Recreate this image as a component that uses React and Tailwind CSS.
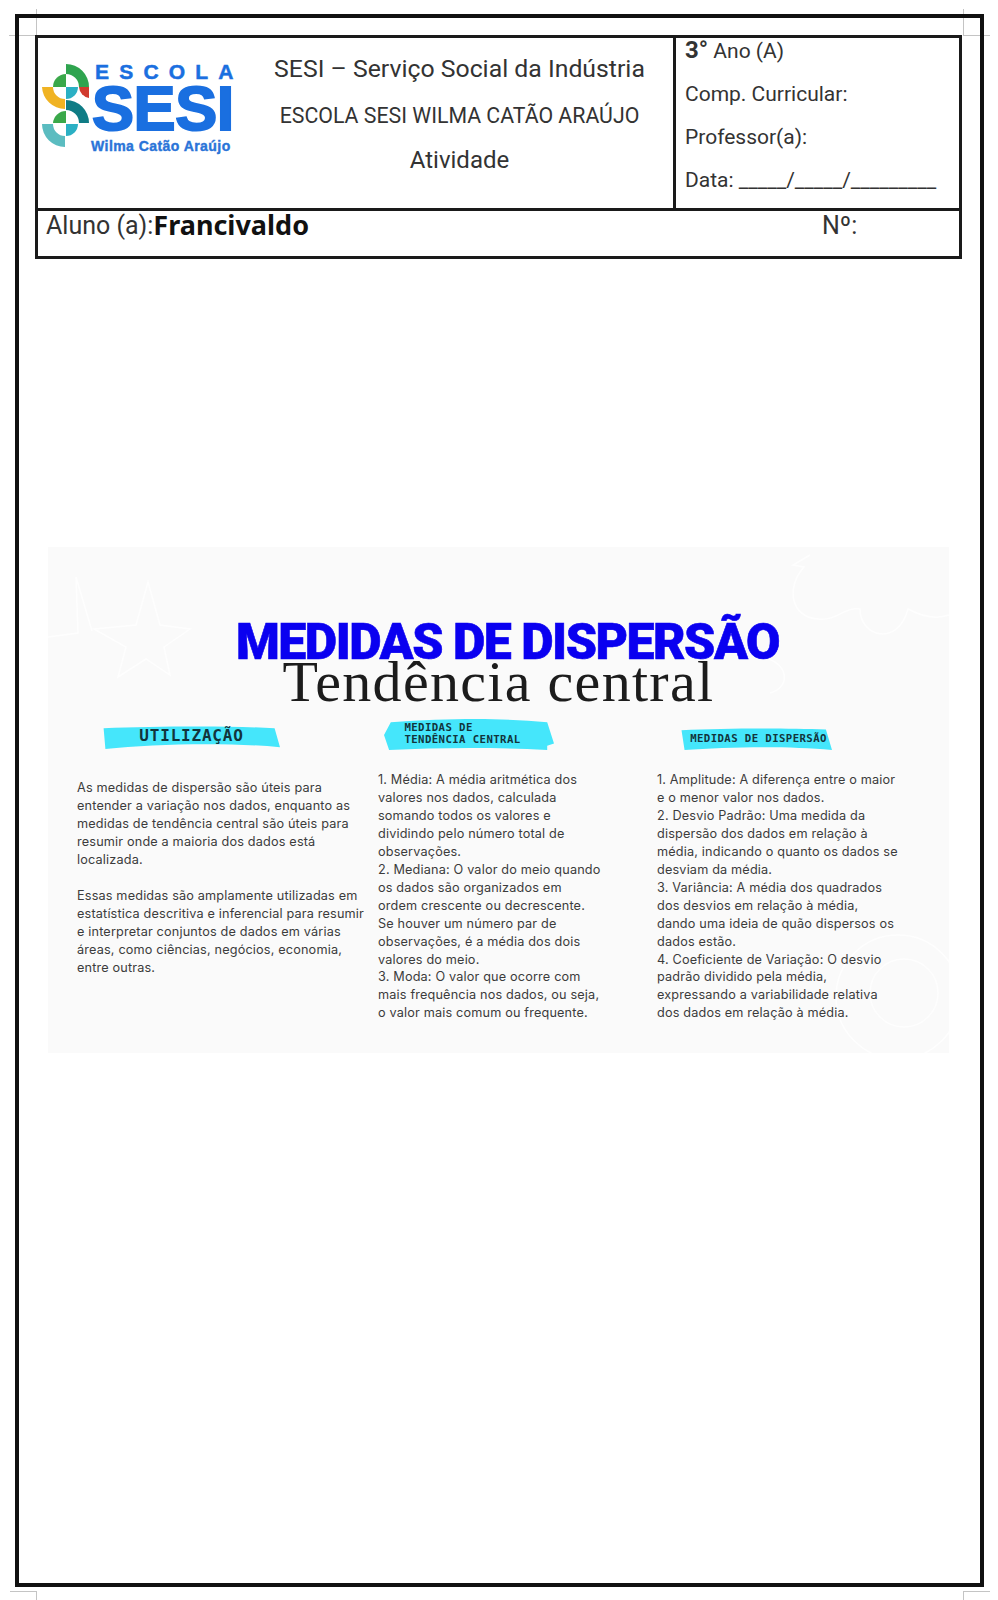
import React from "react";

const utilizacao = [
  "As medidas de dispersão são úteis para",
  "entender a variação nos dados, enquanto as",
  "medidas de tendência central são úteis para",
  "resumir onde a maioria dos dados está",
  "localizada.",
  "\u00a0",
  "Essas medidas são amplamente utilizadas em",
  "estatística descritiva e inferencial para resumir",
  "e interpretar conjuntos de dados em várias",
  "áreas, como ciências, negócios, economia,",
  "entre outras.",
];

const tendencia = [
  "1. Média: A média aritmética dos",
  "valores nos dados, calculada",
  "somando todos os valores e",
  "dividindo pelo número total de",
  "observações.",
  "2. Mediana: O valor do meio quando",
  "os dados são organizados em",
  "ordem crescente ou decrescente.",
  "Se houver um número par de",
  "observações, é a média dos dois",
  "valores do meio.",
  "3. Moda: O valor que ocorre com",
  "mais frequência nos dados, ou seja,",
  "o valor mais comum ou frequente.",
];

const dispersao = [
  "1. Amplitude: A diferença entre o maior",
  "e o menor valor nos dados.",
  "2. Desvio Padrão: Uma medida da",
  "dispersão dos dados em relação à",
  "média, indicando o quanto os dados se",
  "desviam da média.",
  "3. Variância: A média dos quadrados",
  "dos desvios em relação à média,",
  "dando uma ideia de quão dispersos os",
  "dados estão.",
  "4. Coeficiente de Variação: O desvio",
  "padrão dividido pela média,",
  "expressando a variabilidade relativa",
  "dos dados em relação à média.",
];

const Lines = ({ items }) => (
  <div className="font-['Inter',sans-serif] text-[12.7px] leading-[17.95px] text-[#3c3c3c] whitespace-nowrap tracking-[0.16px]">
    {items.map((line, i) => (
      <div key={i}>{line}</div>
    ))}
  </div>
);

const Emblem = () => (
  <svg viewBox="0 0 50 88" className="w-[50px] h-[88px] shrink-0">
    <path d="M25 2 A23 23 0 0 1 48 25 L38 25 A13 13 0 0 0 25 12 Z" fill="#2fa44f" />
    <path d="M12 25 A13 13 0 0 1 25 12 L25 25 Z" fill="#3aa84a" />
    <path d="M38 25 L48 25 L48 36 A12 12 0 0 1 38 25 Z" fill="#d13b2e" />
    <path d="M25 25 L37 25 A12 12 0 0 1 25 37 Z" fill="#2bb0c4" />
    <path d="M1 25 L12 25 A12 12 0 0 0 24 37 L24 47 A23 23 0 0 1 1 25 Z" fill="#f0b323" />
    <path d="M25 38 A23 23 0 0 1 48 61 L38 61 A13 13 0 0 0 25 48 Z" fill="#0f7c85" />
    <path d="M12 61 A13 13 0 0 1 25 49 L25 61 Z" fill="#3aa84a" />
    <path d="M25 62 L37 62 A12 12 0 0 1 25 74 Z" fill="#2bb0c4" />
    <path d="M1 62 L12 62 A12 12 0 0 0 24 74 L24 85 A23 23 0 0 1 1 62 Z" fill="#5bbcc0" />
  </svg>
);

const Logo = () => (
  <div className="flex items-start gap-[2px] pl-[3px] pt-[24px]">
    <Emblem />
    <div className="flex flex-col -mt-[1px] text-[#1a6fe0]">
      <div className="font-['Liberation_Sans',sans-serif] font-bold text-[21px] leading-[21px] tracking-[10.2px] pl-[2px] whitespace-nowrap [-webkit-text-stroke:0.5px_#1a6fe0]">
        ESCOLA
      </div>
      <div className="font-['Liberation_Sans',sans-serif] font-bold text-[63px] leading-[50px] mt-[1px] -ml-[1px] tracking-[-0.4px] whitespace-nowrap [-webkit-text-stroke:2px_#1a6fe0]">
        SESI
      </div>
      <div className="font-['Liberation_Sans',sans-serif] font-bold text-[14px] leading-[16px] mt-[5px] -ml-[2px] tracking-[0.45px] whitespace-nowrap text-[#2a74d8] [-webkit-text-stroke:0.4px_#2a74d8]">
        Wilma Catão Araújo
      </div>
    </div>
  </div>
);

const Header = () => (
  <div className="ml-[16px] mt-[17px] w-[927px] border-[3px] border-[#1a1a1a] font-['Roboto',sans-serif] text-[#333]">
    <div className="flex h-[173px] border-b-[3px] border-[#1a1a1a]">
      <div className="w-[218px] shrink-0">
        <Logo />
      </div>
      <div className="w-[417px] shrink-0 flex flex-col items-center pt-[13px] pr-[10px] whitespace-nowrap">
        <div className="text-[24.8px] leading-[36px]">SESI – Serviço Social da Indústria</div>
        <div className="text-[21.3px] leading-[32px] mt-[13px]">ESCOLA SESI WILMA CATÃO ARAÚJO</div>
        <div className="text-[24px] leading-[34px] mt-[11px]">Atividade</div>
      </div>
      <div className="flex-1 border-l-[3px] border-[#1a1a1a] pl-[9px] text-[21px] leading-[24px] whitespace-nowrap">
        <div>
          <span className="font-bold text-[24px]">3°</span> Ano (A)
        </div>
        <div className="mt-[19px]">Comp. Curricular:</div>
        <div className="mt-[19px]">Professor(a):</div>
        <div className="mt-[19px]">Data: _____/_____/_________</div>
      </div>
    </div>
    <div className="flex h-[45px] items-start whitespace-nowrap pl-[8px]">
      <span className="text-[25px] leading-[30px]">Aluno (a):</span>
      <span className="font-['Noto_Sans',sans-serif] font-bold text-[27px] leading-[28px] text-[#111]">
        Francivaldo
      </span>
      <span className="text-[25px] leading-[30px] ml-[513px]">Nº:</span>
    </div>
  </div>
);

const Pill = ({ path, className, children }) => (
  <div className={`relative flex items-center justify-center ${className}`}>
    <svg viewBox="0 0 100 30" preserveAspectRatio="none" className="absolute inset-0 w-full h-full">
      <path d={path} fill="#45e6fb" />
    </svg>
    <div className="relative font-['DejaVu_Sans_Mono',monospace] font-bold text-[#12343b] whitespace-nowrap">
      {children}
    </div>
  </div>
);

const Slide = () => (
  <div className="relative ml-[29px] mt-[288px] w-[901px] h-[506px] bg-[#fafafa] overflow-hidden">
    {/* faint background doodles */}
    <svg viewBox="0 0 901 506" className="absolute inset-0 w-full h-full" fill="none" stroke="#fefefe" strokeWidth="1.5">
      <path d="M100 35 L112 78 L142 82 L116 100 L122 128 L98 112 L70 130 L78 100 L46 82 L88 78 Z" />
      <path d="M0 90 L30 86 L28 30 L44 84" />
      <path d="M762 8 L745 18 L756 20 C738 40 742 70 770 72 C790 74 795 60 812 62 C812 90 850 100 860 62 C875 70 890 72 901 68" />
      <path d="M710 110 C740 112 745 140 722 146" />
      <circle cx="850" cy="450" r="62" />
      <circle cx="856" cy="446" r="34" />
    </svg>

    <div className="relative flex flex-col items-center pt-[66px]">
      <h1 className="pl-[18px] font-['Roboto',sans-serif] font-black text-[50px] leading-[58px] text-[#0a00f0] whitespace-nowrap tracking-[-1.5px] [-webkit-text-stroke:0.6px_#0a00f0]">
        MEDIDAS DE DISPERSÃO
      </h1>
      <h2 className="-mt-[19px] font-['Liberation_Serif',serif] text-[58px] leading-[60px] text-[#1c1c1c] whitespace-nowrap tracking-[1.3px]">
        Tendência central
      </h2>
    </div>

    <div className="relative flex pl-[29px] mt-[11px]">
      <div className="w-[301px] shrink-0">
        <Pill
          path="M2 6 C30 4 70 3 97 6 L100 28 C70 22 30 24 3 30 Z"
          className="ml-[23px] w-[180px] h-[26px] pl-[3px] text-[16px] tracking-[0.8px]"
        >
          UTILIZAÇÃO
        </Pill>
        <div className="mt-[30px]">
          <Lines items={utilizacao} />
        </div>
      </div>
      <div className="w-[279px] shrink-0 -mt-[5px]">
        <Pill
          path="M4 4 C40 0 70 0 96 4 L100 24 L96 26 L96 30 C60 27 30 28 3 30 L0 16 Z"
          className="ml-[6px] w-[170px] h-[32px] text-[10.7px] leading-[12px] tracking-[0.4px] pr-[13px]"
        >
          MEDIDAS DE
          <br />
          TENDÊNCIA CENTRAL
        </Pill>
        <div className="mt-[21px]">
          <Lines items={tendencia} />
        </div>
      </div>
      <div className="flex-1 mt-[5px]">
        <Pill
          path="M1 3 C30 0 70 0 96 2 L100 30 C70 24 30 26 3 30 Z"
          className="ml-[23px] w-[152px] h-[22px] pl-[5px] text-[10.7px] tracking-[0.4px]"
        >
          MEDIDAS DE DISPERSÃO
        </Pill>
        <div className="mt-[21px]">
          <Lines items={dispersao} />
        </div>
      </div>
    </div>
  </div>
);

const App = () => (
  <div className="relative w-[998px] h-[1600px] bg-white overflow-hidden pt-[14px] pl-[15px]">
    {/* page crop marks */}
    <div className="absolute left-[36px] top-[9px] w-px h-[26px] bg-[#c4c4c4]" />
    <div className="absolute left-[9px] top-[35px] w-[27px] h-px bg-[#c4c4c4]" />
    <div className="absolute left-[963px] top-[9px] w-px h-[26px] bg-[#c4c4c4]" />
    <div className="absolute left-[963px] top-[35px] w-[27px] h-px bg-[#c4c4c4]" />
    <div className="absolute left-[10px] top-[1591px] w-[26px] h-px bg-[#c4c4c4]" />
    <div className="absolute left-[36px] top-[1591px] w-px h-[9px] bg-[#c4c4c4]" />
    <div className="absolute left-[963px] top-[1591px] w-[27px] h-px bg-[#c4c4c4]" />
    <div className="absolute left-[963px] top-[1591px] w-px h-[9px] bg-[#c4c4c4]" />

    <div className="relative w-[969px] h-[1573px] border-4 border-[#111]">
      <Header />
      <Slide />
    </div>
  </div>
);

export default App;
